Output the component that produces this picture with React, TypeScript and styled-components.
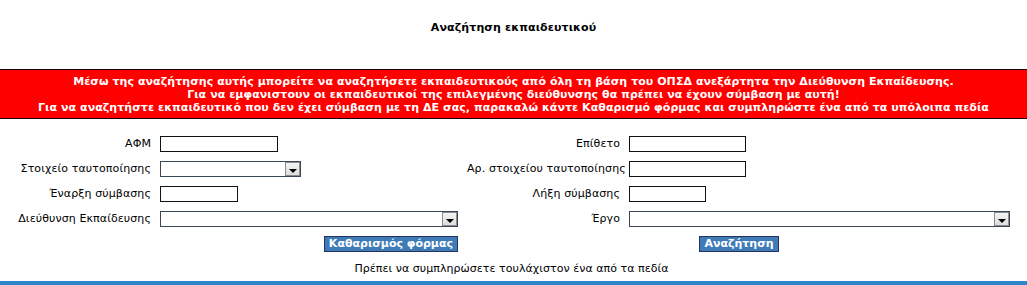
import React from "react";
import styled, { createGlobalStyle } from "styled-components";

const GlobalStyle = createGlobalStyle`
  body {
    margin: 0;
    background: #fff;
    font-family: "DejaVu Sans", Verdana, sans-serif;
    font-size: 11px;
    color: #000;
  }
`;

const Page = styled.div`
  width: 1027px;
  overflow: hidden;
`;

const TitleWrap = styled.div`
  height: 69px;
  display: flex;
  justify-content: center;
  padding-top: 21px;
  box-sizing: border-box;
`;

const Title = styled.h1`
  margin: 0;
  font-size: 11px;
  font-weight: bold;
  line-height: 13px;
  letter-spacing: 0.12px;
`;

const Banner = styled.div`
  background: #ff0000;
  border-top: 1px solid #1a0000;
  border-bottom: 1px solid #1a0000;
  color: #fff;
  font-weight: bold;
  text-align: center;
  line-height: 13px;
  letter-spacing: 0.06px;
  padding: 5px 0 4px;
`;

const Form = styled.div`
  display: grid;
  grid-template-columns: 151px 298px 153px 382px;
  grid-auto-rows: 25px;
  column-gap: 9px;
  align-items: center;
  margin-top: 12px;
`;

const Label = styled.label`
  text-align: right;
  white-space: nowrap;
  letter-spacing: 0.1px;
`;

const Cell = styled.div`
  display: flex;
`;

const TextInput = styled.input<{ $w: number }>`
  width: ${(p) => p.$w}px;
  height: 16px;
  box-sizing: border-box;
  border: 1px solid #111;
  padding: 0 2px;
  margin: 0;
  font: inherit;
`;

const SelectBox = styled.div<{ $w: number }>`
  width: ${(p) => p.$w}px;
  height: 16px;
  box-sizing: border-box;
  border: 1px solid #3a4658;
  display: flex;
  justify-content: flex-end;
  background: #fff;
`;

const DropButton = styled.div`
  width: 15px;
  box-sizing: border-box;
  border: 1px solid #8d8d8d;
  background: linear-gradient(#f4f4f4, #dcdcdc);
  display: flex;
  justify-content: center;
  align-items: flex-end;
  padding-bottom: 2px;
`;

const Arrow = styled.span`
  width: 0;
  height: 0;
  border-left: 4px solid transparent;
  border-right: 4px solid transparent;
  border-top: 4px solid #000;
`;

const ActionCell = styled.div<{ $align: string }>`
  grid-column: span 2;
  display: flex;
  justify-content: ${(p) => p.$align};
`;

const Button = styled.button`
  height: 16px;
  box-sizing: border-box;
  background: #3f7cb7;
  border: 1px solid #24325f;
  color: #fff;
  font-family: "DejaVu Sans", Verdana, sans-serif;
  font-size: 11px;
  font-weight: bold;
  line-height: 12px;
  padding: 0 4px;
  margin: 0;
`;

const Note = styled.div`
  grid-column: 1 / -1;
  text-align: center;
  padding-left: 12px;
  letter-spacing: 0.05px;
`;

const BottomBar = styled.div`
  height: 6px;
  background: #2c87c9;
`;

const Select = ({ width }: { width: number }) => (
  <SelectBox $w={width}>
    <DropButton>
      <Arrow />
    </DropButton>
  </SelectBox>
);

const App = () => {
  return (
    <Page>
      <GlobalStyle />
      <TitleWrap>
        <Title>Αναζήτηση εκπαιδευτικού</Title>
      </TitleWrap>
      <Banner>
        Μέσω της αναζήτησης αυτής μπορείτε να αναζητήσετε εκπαιδευτικούς από όλη τη βάση του ΟΠΣΔ ανεξάρτητα την Διεύθυνση Εκπαίδευσης.
        <br />
        Για να εμφανιστουν οι εκπαιδευτικοί της επιλεγμένης διεύθυνσης θα πρέπει να έχουν σύμβαση με αυτή!
        <br />
        Για να αναζητήστε εκπαιδευτικό που δεν έχει σύμβαση με τη ΔΕ σας, παρακαλώ κάντε Καθαρισμό φόρμας και συμπληρώστε ένα από τα υπόλοιπα πεδία
      </Banner>
      <Form>
        <Label>ΑΦΜ</Label>
        <Cell>
          <TextInput $w={118} />
        </Cell>
        <Label>Επίθετο</Label>
        <Cell>
          <TextInput $w={117} />
        </Cell>

        <Label>Στοιχείο ταυτοποίησης</Label>
        <Cell>
          <Select width={141} />
        </Cell>
        <Label>Αρ. στοιχείου ταυτοποίησης</Label>
        <Cell>
          <TextInput $w={117} />
        </Cell>

        <Label>Έναρξη σύμβασης</Label>
        <Cell>
          <TextInput $w={78} />
        </Cell>
        <Label>Λήξη σύμβασης</Label>
        <Cell>
          <TextInput $w={77} />
        </Cell>

        <Label>Διεύθυνση Εκπαίδευσης</Label>
        <Cell>
          <Select width={298} />
        </Cell>
        <Label>Έργο</Label>
        <Cell>
          <Select width={381} />
        </Cell>

        <ActionCell $align="flex-end">
          <Button>Καθαρισμός φόρμας</Button>
        </ActionCell>
        <ActionCell $align="center">
          <Button>Αναζήτηση</Button>
        </ActionCell>

        <Note>Πρέπει να συμπληρώσετε τουλάχιστον ένα από τα πεδία</Note>
      </Form>
      <BottomBar />
    </Page>
  );
};

export default App;
